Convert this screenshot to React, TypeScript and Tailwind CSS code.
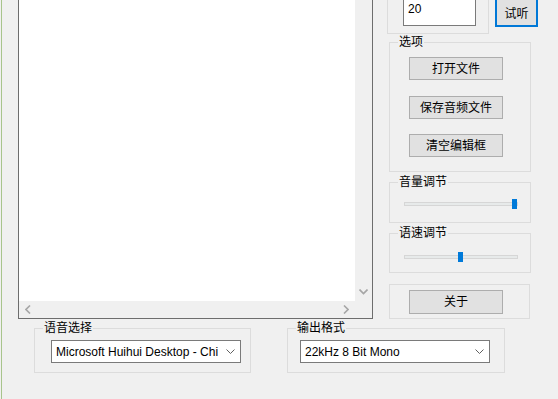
import React from "react";

const FONT = { fontFamily: '"Liberation Sans", "Noto Sans CJK SC", sans-serif' };

function Chevron() {
  return (
    <svg width="9" height="6" viewBox="0 0 9 6" className="block">
      <polyline points="0.5,0.5 4.5,4.5 8.5,0.5" fill="none" stroke="#606060" strokeWidth="1" />
    </svg>
  );
}

function GroupLabel({ text }: { text: string }) {
  return (
    <span className="absolute -top-[9px] left-[8px] bg-[#f0f0f0] px-[1px] text-[12px] leading-[16px] text-black">
      {text}
    </span>
  );
}

function Btn({ text, className = "" }: { text: string; className?: string }) {
  return (
    <div
      className={
        "w-[94px] h-[23px] border border-[#adadad] bg-[#e1e1e1] flex items-center justify-center text-[12px] text-black " +
        className
      }
    >
      {text}
    </div>
  );
}

function Slider({ pos }: { pos: number }) {
  return (
    <div className="relative ml-[14px] w-[114px] h-[4px] bg-[#e7eaea] border border-[#d6d6d6]">
      <div
        className="absolute -top-[4px] w-[5px] h-[10px] bg-[#007ad9]"
        style={{ left: pos }}
      />
    </div>
  );
}

export default function App() {
  return (
    <div className="w-[558px] h-[399px] bg-[#f0f0f0] overflow-hidden pl-px" style={FONT}>
      <div className="h-full border-l border-[#a8c48c] flex flex-col">
        {/* top row */}
        <div className="flex h-[319px]">
          <div className="w-[16px] shrink-0" />
          {/* text area */}
          <div className="w-[355px] h-[319px] border border-t-0 border-[#6d6d6d] flex flex-col shrink-0">
            <div className="flex flex-1">
              <div className="flex-1 bg-white" />
              <div className="w-[17px] bg-[#f0f0f0] flex flex-col justify-end items-center pb-[6px]">
                <svg width="9" height="6" viewBox="0 0 9 6">
                  <polyline points="0.5,0.5 4.5,4.5 8.5,0.5" fill="none" stroke="#a6a6a6" strokeWidth="1.6" />
                </svg>
              </div>
            </div>
            <div className="flex h-[17px]">
              <div className="flex-1 bg-[#f0f0f0] flex items-center justify-between px-[6px]">
                <svg width="6" height="9" viewBox="0 0 6 9">
                  <polyline points="5,0.5 1,4.5 5,8.5" fill="none" stroke="#a6a6a6" strokeWidth="1.6" />
                </svg>
                <svg width="6" height="9" viewBox="0 0 6 9">
                  <polyline points="1,0.5 5,4.5 1,8.5" fill="none" stroke="#a6a6a6" strokeWidth="1.6" />
                </svg>
              </div>
              <div className="w-[17px] bg-[#f0f0f0]" />
            </div>
          </div>
          <div className="w-[14px] shrink-0" />
          {/* right column */}
          <div className="w-[151px] flex flex-col shrink-0">
            <div className="flex items-start h-[34px]">
              <div className="w-[102px] h-[34px] border border-t-0 border-[#dcdcdc]">
                <div className="ml-[15px] w-[73px] h-[26px] border border-t-0 border-[#7a7a7a] bg-white pl-[4px] pt-[2px] text-[12px] leading-[15px] text-black">
                  20
                </div>
              </div>
              <div className="ml-[6px] w-[43px] h-[27px] border-2 border-t-0 border-[#0078d7] bg-[#e1e1e1] flex items-center justify-center pt-[2px] text-[12px] text-black">
                试听
              </div>
            </div>
            {/* options */}
            <div className="relative mt-[8px] ml-[2px] w-[142px] h-[130px] border border-[#dcdcdc] flex flex-col">
              <GroupLabel text="选项" />
              <Btn text="打开文件" className="ml-[19px] mt-[14px]" />
              <Btn text="保存音频文件" className="ml-[19px] mt-[16px]" />
              <Btn text="清空编辑框" className="ml-[19px] mt-[15px]" />
            </div>
            <div className="relative mt-[10px] ml-[2px] w-[142px] h-[41px] border border-[#dcdcdc] pt-[19px]">
              <GroupLabel text="音量调节" />
              <Slider pos={107} />
            </div>
            <div className="relative mt-[10px] ml-[2px] w-[142px] h-[40px] border border-[#dcdcdc] pt-[21px]">
              <GroupLabel text="语速调节" />
              <Slider pos={53} />
            </div>
            <div className="mt-[11px] ml-[2px] w-[141px] h-[35px] border border-[#dcdcdc] pt-[5px]">
              <Btn text="关于" className="ml-[19px] h-[24px]" />
            </div>
          </div>
        </div>
        {/* bottom row */}
        <div className="flex mt-[9px]">
          <div className="w-[32px] shrink-0" />
          <div className="relative w-[217px] h-[45px] border border-[#dcdcdc] pt-[11px] pl-[16px] shrink-0">
            <GroupLabel text="语音选择" />
            <div className="w-[190px] h-[23px] border border-[#7a7a7a] bg-white flex items-center justify-between pl-[4px] pr-[5px] text-[12px] text-black whitespace-nowrap">
              <span>Microsoft Huihui Desktop - Chi</span>
              <Chevron />
            </div>
          </div>
          <div className="w-[36px] shrink-0" />
          <div className="relative w-[218px] h-[45px] border border-[#dcdcdc] pt-[11px] pl-[12px] shrink-0">
            <GroupLabel text="输出格式" />
            <div className="w-[190px] h-[23px] border border-[#7a7a7a] bg-white flex items-center justify-between pl-[4px] pr-[5px] text-[12px] text-black whitespace-nowrap">
              <span>22kHz 8 Bit Mono</span>
              <Chevron />
            </div>
          </div>
        </div>
      </div>
    </div>
  );
}
